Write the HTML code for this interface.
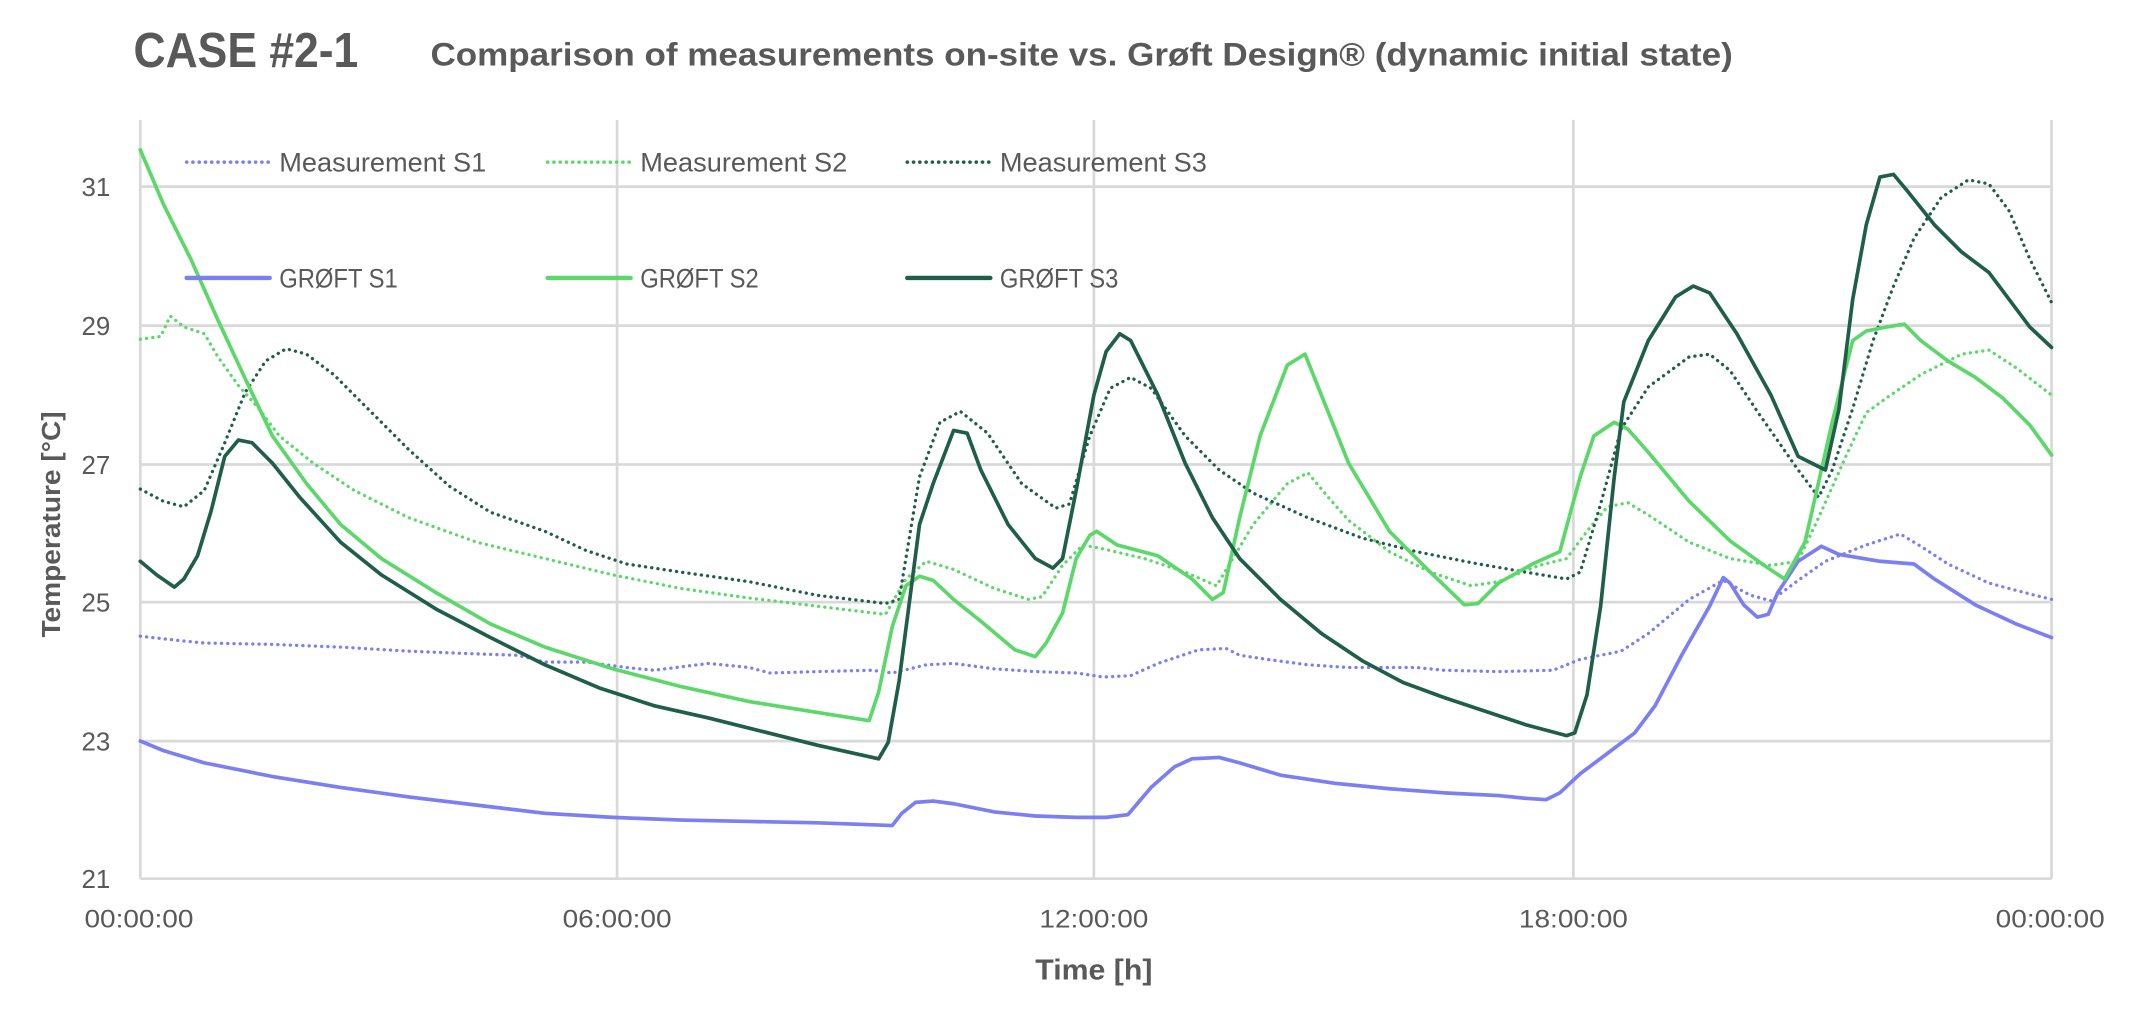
<!DOCTYPE html>
<html><head><meta charset="utf-8"><style>
html,body{margin:0;padding:0;background:#fff;}
svg{display:block}
text{font-family:"Liberation Sans",sans-serif;fill:#595959}
</style></head><body>
<svg width="2136" height="1010" viewBox="0 0 1568 741.4" preserveAspectRatio="none" xmlns="http://www.w3.org/2000/svg">
<text x="98" y="49" font-size="36" font-weight="bold" textLength="165" lengthAdjust="spacingAndGlyphs">CASE #2-1</text>
<text x="316" y="48" font-size="24" font-weight="bold" textLength="956" lengthAdjust="spacingAndGlyphs">Comparison of measurements on-site vs. Grøft Design® (dynamic initial state)</text>
<g stroke="#d9d9d9" stroke-width="2" fill="none">
<line x1="103" y1="137" x2="1506" y2="137"/><line x1="103" y1="239" x2="1506" y2="239"/><line x1="103" y1="341" x2="1506" y2="341"/><line x1="103" y1="442" x2="1506" y2="442"/><line x1="103" y1="544" x2="1506" y2="544"/><line x1="103" y1="645" x2="1506" y2="645"/>
<line x1="103" y1="88" x2="103" y2="645"/><line x1="453" y1="88" x2="453" y2="645"/><line x1="803" y1="88" x2="803" y2="645"/><line x1="1155" y1="88" x2="1155" y2="645"/><line x1="1506" y1="88" x2="1506" y2="645"/>
</g>
<g font-size="19" text-anchor="end">
<text x="81" y="144">31</text><text x="81" y="246">29</text><text x="81" y="348">27</text><text x="81" y="449">25</text><text x="81" y="551">23</text><text x="81" y="652">21</text>
</g>
<g font-size="18" text-anchor="middle">
<text x="102" y="681" textLength="80" lengthAdjust="spacingAndGlyphs">00:00:00</text><text x="453" y="681" textLength="80" lengthAdjust="spacingAndGlyphs">06:00:00</text><text x="803" y="681" textLength="80" lengthAdjust="spacingAndGlyphs">12:00:00</text><text x="1155" y="681" textLength="80" lengthAdjust="spacingAndGlyphs">18:00:00</text><text x="1505" y="681" textLength="80" lengthAdjust="spacingAndGlyphs">00:00:00</text>
</g>
<text x="803" y="719" font-size="21" font-weight="bold" text-anchor="middle" textLength="86" lengthAdjust="spacingAndGlyphs">Time [h]</text>
<text transform="translate(44,385) rotate(-90)" font-size="19" font-weight="bold" text-anchor="middle" textLength="166" lengthAdjust="spacingAndGlyphs">Temperature [°C]</text>
<g fill="none" stroke-linejoin="round" stroke-linecap="round">
<polyline stroke="#7b7ff2" stroke-width="2.4" stroke-dasharray="0.1 4.5" points="103,467 130,470 150,472 200,473 250,475 300,478 350,480 380,481 400,486 430,486 460,490 480,492 520,487 550,490 565,494 600,493 640,492 655,494 680,488 700,487 730,491 760,493 790,494 810,497 830,496 850,487 880,477 900,476 910,481 930,484 960,488 990,490 1040,490 1060,492 1100,493 1140,492 1160,484 1190,478 1210,465 1240,440 1265,426 1285,437 1300,441 1320,426 1340,412 1370,400 1395,392 1410,401 1430,414 1460,428 1490,436 1506,440"/>
<polyline stroke="#5cd86a" stroke-width="2.4" stroke-dasharray="0.1 4.5" points="103,249 118,247 125,232 135,240 150,245 160,262 175,283 190,300 205,320 230,340 260,360 300,380 350,398 400,410 450,422 500,432 550,439 600,445 650,451 665,425 680,412 700,418 730,432 755,440 765,438 780,415 795,400 810,403 840,410 870,420 893,430 920,385 945,355 960,347 975,365 990,382 1020,405 1050,420 1080,430 1100,427 1130,415 1150,410 1165,390 1180,372 1195,369 1210,378 1240,398 1270,410 1300,415 1320,412 1335,380 1355,335 1370,303 1385,292 1410,275 1440,260 1460,257 1480,270 1506,290"/>
<polyline stroke="#1f5e48" stroke-width="2.4" stroke-dasharray="0.1 4.5" points="103,359 120,368 135,372 150,360 165,325 180,288 195,265 210,256 225,260 245,275 270,300 300,330 330,357 360,376 400,390 430,404 460,414 500,420 550,427 600,437 650,443 660,440 675,350 690,310 705,302 725,318 750,355 775,373 785,370 800,320 815,285 830,277 845,285 870,320 895,345 920,362 960,380 1000,395 1040,405 1080,413 1120,420 1150,425 1160,420 1175,370 1190,315 1210,284 1240,262 1255,260 1270,272 1290,302 1320,345 1335,365 1345,345 1360,300 1375,250 1390,210 1405,175 1425,145 1445,132 1460,135 1475,155 1490,190 1506,222"/>
<polyline stroke="#7b7ff2" stroke-width="2.7" points="103,544 120,551 150,560 200,570 250,578 300,585 350,591 400,597 450,600 500,602 550,603 600,604 655,606 662,597 672,589 685,588 700,590 730,596 760,599 790,600 812,600 828,598 845,578 862,563 875,557 895,556 910,560 940,569 980,575 1020,579 1060,582 1100,584 1120,586 1135,587 1145,582 1160,568 1180,553 1200,538 1215,518 1235,480 1255,445 1265,424 1270,428 1280,444 1290,453 1298,451 1305,435 1320,412 1337,401 1350,407 1380,412 1405,414 1420,425 1450,444 1480,458 1506,468"/>
<polyline stroke="#5cd86a" stroke-width="2.7" points="103,110 120,150 140,190 160,235 180,278 200,320 225,355 250,385 280,410 320,435 360,458 400,475 450,491 500,504 550,515 600,523 638,529 645,508 655,460 665,430 675,423 685,426 700,440 720,456 745,477 760,482 768,472 780,450 790,410 800,393 805,390 820,400 850,408 875,425 890,440 898,435 910,380 925,320 945,268 958,260 970,290 990,340 1020,390 1050,420 1075,444 1085,443 1100,428 1125,414 1145,405 1160,350 1170,320 1185,310 1195,315 1210,332 1240,368 1270,397 1295,415 1310,425 1325,398 1345,310 1360,250 1370,243 1385,240 1398,238 1410,250 1430,265 1450,277 1470,292 1490,312 1506,334"/>
<polyline stroke="#1f5e48" stroke-width="2.7" points="103,412 115,422 128,431 135,425 145,408 155,375 165,335 175,323 185,325 200,340 220,365 250,398 280,422 320,447 360,468 400,488 440,505 480,518 520,527 560,537 600,547 645,557 652,545 660,500 675,385 685,355 700,316 710,318 720,345 740,385 760,410 773,417 780,410 790,360 803,290 812,258 822,245 830,250 850,290 870,340 890,380 910,410 940,440 970,465 1000,485 1030,501 1060,512 1090,522 1120,532 1150,540 1156,538 1165,510 1175,445 1185,350 1192,295 1210,250 1230,218 1243,210 1255,215 1275,245 1300,290 1320,335 1330,340 1340,345 1350,300 1360,220 1370,165 1380,130 1390,128 1400,140 1420,165 1440,185 1460,200 1475,220 1490,240 1506,255"/>
</g>
<g fill="none" stroke-linecap="round" stroke-width="2.6">
<line x1="137" y1="119" x2="198" y2="119" stroke="#7b7ff2" stroke-dasharray="0.1 4.5"/>
<line x1="402" y1="119" x2="463" y2="119" stroke="#5cd86a" stroke-dasharray="0.1 4.5"/>
<line x1="666" y1="119" x2="727" y2="119" stroke="#1f5e48" stroke-dasharray="0.1 4.5"/>
<line x1="137" y1="204" x2="198" y2="204" stroke="#7b7ff2" stroke-width="3.2"/>
<line x1="402" y1="204" x2="463" y2="204" stroke="#5cd86a" stroke-width="3.2"/>
<line x1="666" y1="204" x2="727" y2="204" stroke="#1f5e48" stroke-width="3.2"/>
</g>
<g font-size="20">
<text x="205" y="126" textLength="152" lengthAdjust="spacingAndGlyphs">Measurement S1</text>
<text x="470" y="126" textLength="152" lengthAdjust="spacingAndGlyphs">Measurement S2</text>
<text x="734" y="126" textLength="152" lengthAdjust="spacingAndGlyphs">Measurement S3</text>
<text x="205" y="211" textLength="87" lengthAdjust="spacingAndGlyphs">GRØFT S1</text>
<text x="470" y="211" textLength="87" lengthAdjust="spacingAndGlyphs">GRØFT S2</text>
<text x="734" y="211" textLength="87" lengthAdjust="spacingAndGlyphs">GRØFT S3</text>
</g>
</svg>
</body></html>
